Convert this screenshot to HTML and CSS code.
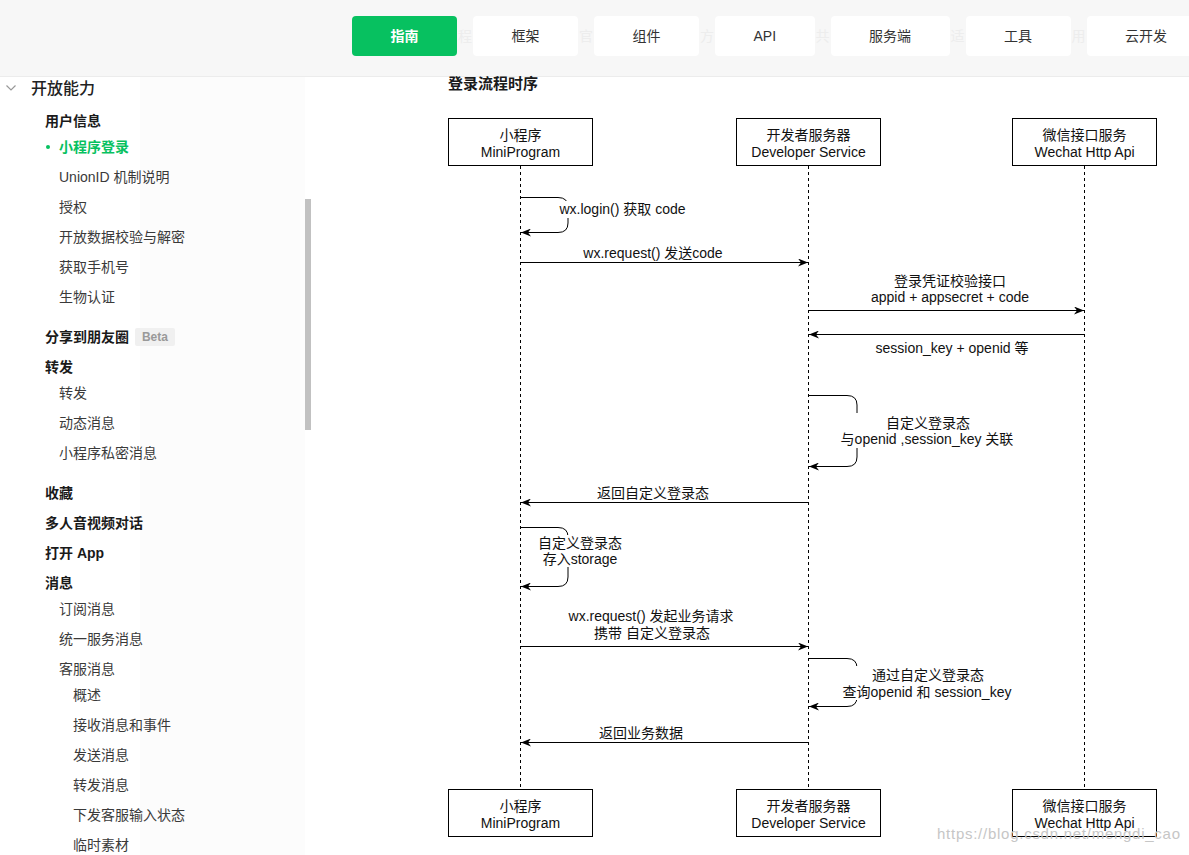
FILE: index.html
```html
<!DOCTYPE html>
<html>
<head>
    <meta charset="utf-8">
    <title>小程序登录</title>
    <link rel="stylesheet" href="styles.css">
</head>
<body>
    <header class="topbar">
        <nav class="tabs">
            <a class="tab tab-active">指南</a>
            <span class="ghost">程</span>
            <a class="tab">框架</a>
            <span class="ghost">官</span>
            <a class="tab">组件</a>
            <span class="ghost">方</span>
            <a class="tab">API</a>
            <span class="ghost">共</span>
            <a class="tab">服务端</a>
            <span class="ghost">适</span>
            <a class="tab">工具</a>
            <span class="ghost">用</span>
            <a class="tab">云开发</a>
        </nav>
    </header>

    <div class="layout">
        <aside class="sidebar">
            <div class="side-head">
                <svg class="chevron" width="10" height="6" viewBox="0 0 10 6"><polyline points="0.5,0.5 5,5 9.5,0.5" fill="none" stroke="#999" stroke-width="1.2"/></svg>
                <span>开放能力</span>
            </div>

            <div class="group-title">用户信息</div>
            <ul class="side-list">
                <li class="active">小程序登录</li>
                <li>UnionID 机制说明</li>
                <li>授权</li>
                <li>开放数据校验与解密</li>
                <li>获取手机号</li>
                <li>生物认证</li>
            </ul>

            <div class="group-title">分享到朋友圈 <span class="badge">Beta</span></div>
            <div class="group-title">转发</div>
            <ul class="side-list">
                <li>转发</li>
                <li>动态消息</li>
                <li>小程序私密消息</li>
            </ul>

            <div class="group-title">收藏</div>
            <div class="group-title">多人音视频对话</div>
            <div class="group-title">打开 App</div>
            <div class="group-title">消息</div>
            <ul class="side-list">
                <li>订阅消息</li>
                <li>统一服务消息</li>
                <li class="sub-title">客服消息</li>
                <li class="nested">概述</li>
                <li class="nested">接收消息和事件</li>
                <li class="nested">发送消息</li>
                <li class="nested">转发消息</li>
                <li class="nested">下发客服输入状态</li>
                <li class="nested">临时素材</li>
            </ul>

            <div class="scroll-thumb"></div>
        </aside>

        <main class="content">
            <h3 class="doc-title">登录流程时序</h3>

            <svg class="seq" width="877" height="755" viewBox="312 100 877 755">
                <defs>
                    <marker id="arrow" viewBox="0 0 10 8" refX="10" refY="4" markerWidth="10" markerHeight="8" markerUnits="userSpaceOnUse" orient="auto">
                        <path d="M0,0 L10,4 L0,8 L3,4 Z" fill="#000"/>
                    </marker>
                </defs>

                <!-- lifelines -->
                <g class="lifeline">
                    <line x1="520.5" y1="166" x2="520.5" y2="789"/>
                    <line x1="808.5" y1="166" x2="808.5" y2="789"/>
                    <line x1="1084.5" y1="166" x2="1084.5" y2="789"/>
                </g>

                <!-- participants -->
                <g class="actor">
                    <rect x="448.5" y="118.5" width="144" height="47"/>
                    <text x="520.5" y="140">小程序</text>
                    <text x="520.5" y="157">MiniProgram</text>

                    <rect x="736.5" y="118.5" width="144" height="47"/>
                    <text x="808.5" y="140">开发者服务器</text>
                    <text x="808.5" y="157">Developer Service</text>

                    <rect x="1012.5" y="118.5" width="144" height="47"/>
                    <text x="1084.5" y="140">微信接口服务</text>
                    <text x="1084.5" y="157">Wechat Http Api</text>

                    <rect x="448.5" y="789.5" width="144" height="47"/>
                    <text x="520.5" y="811">小程序</text>
                    <text x="520.5" y="828">MiniProgram</text>

                    <rect x="736.5" y="789.5" width="144" height="47"/>
                    <text x="808.5" y="811">开发者服务器</text>
                    <text x="808.5" y="828">Developer Service</text>

                    <rect x="1012.5" y="789.5" width="144" height="47"/>
                    <text x="1084.5" y="811">微信接口服务</text>
                    <text x="1084.5" y="828">Wechat Http Api</text>
                </g>

                <!-- messages -->
                <g class="msg">
                    <path d="M520.5 197.5 H558 Q568 197.5 568 207 V223 Q568 232.5 558 232.5 H521"/>
                    <path d="M520.5 262.5 H808"/>
                    <path d="M808.5 310.5 H1084"/>
                    <path d="M1084.5 334.5 H809"/>
                    <path d="M808.5 395.5 H847 Q857 395.5 857 405 V457 Q857 466.5 847 466.5 H809"/>
                    <path d="M808.5 502.5 H521"/>
                    <path d="M520.5 527.5 H558 Q568 527.5 568 537 V577 Q568 586.5 558 586.5 H521"/>
                    <path d="M520.5 646.5 H808"/>
                    <path d="M808.5 658.5 H847 Q857 658.5 857 668 V697 Q857 706.5 847 706.5 H809"/>
                    <path d="M808.5 742.5 H521"/>
                </g>

                <!-- label backgrounds over the self calls -->
                <g class="label-bg">
                    <rect x="556" y="201" width="134" height="17"/>
                    <rect x="836" y="413" width="183" height="35"/>
                    <rect x="535" y="535" width="90" height="32"/>
                    <rect x="837" y="666" width="180" height="34"/>
                </g>

                <g class="label">
                    <text x="622.5" y="214">wx.login() 获取 code</text>
                    <text x="653" y="258">wx.request() 发送code</text>
                    <text x="950" y="286">登录凭证校验接口</text>
                    <text x="950" y="302">appid + appsecret + code</text>
                    <text x="952" y="353">session_key + openid 等</text>
                    <text x="928" y="428">自定义登录态</text>
                    <text x="927" y="444">与openid ,session_key 关联</text>
                    <text x="653" y="498">返回自定义登录态</text>
                    <text x="580" y="548">自定义登录态</text>
                    <text x="580" y="564">存入storage</text>
                    <text x="651" y="621">wx.request() 发起业务请求</text>
                    <text x="652" y="638">携带 自定义登录态</text>
                    <text x="928" y="680">通过自定义登录态</text>
                    <text x="927" y="697">查询openid 和 session_key</text>
                    <text x="641" y="738">返回业务数据</text>
                </g>

                <text class="watermark" x="937" y="839" textLength="243">https://blog.csdn.net/mengdi_cao</text>
            </svg>
        </main>
    </div>
</body>
</html>
```

FILE: styles.css
```css
* {
    margin: 0;
    padding: 0;
    box-sizing: border-box;
}

body {
    font-family: "Liberation Sans", "Noto Sans CJK SC", sans-serif;
    background: #fff;
    color: #333;
    height: 855px;
    overflow: hidden;
}

/* top navigation */
.topbar {
    height: 77px;
    background: #f7f7f7;
    border-bottom: 1px solid #ececec;
}

.tabs {
    display: flex;
    align-items: center;
    padding: 16px 0 0 352px;
}

.tab {
    display: block;
    flex-shrink: 0;
    height: 40px;
    line-height: 40px;
    padding: 0 38.5px;
    background: #fff;
    border-radius: 4px;
    font-size: 14px;
    color: #333;
    white-space: nowrap;
    cursor: pointer;
}

.tab-active {
    background: #07c160;
    color: #fff;
    font-weight: 700;
}

/* faint text of the banner showing between the tabs */
.ghost {
    flex-shrink: 0;
    width: 16px;
    overflow: hidden;
    font-size: 14px;
    line-height: 40px;
    text-align: center;
    white-space: nowrap;
    color: #ededed;
    user-select: none;
}

/* layout */
.layout {
    display: flex;
    height: 778px;
}

.sidebar {
    position: relative;
    display: flex;
    flex-direction: column;
    width: 312px;
    flex-shrink: 0;
    background: linear-gradient(90deg, #fff 140px, #fcfcfc 140px, #fcfcfc 305px, #fff 305px);
    font-size: 14px;
    overflow: hidden;
}

.side-head {
    display: flex;
    align-items: center;
    flex-shrink: 0;
    height: 22px;
    margin: -1px 0 4px;
    font-size: 16px;
    font-weight: 500;
    color: #222;
}

.chevron {
    margin: 1px 15px 0 6px;
}

.group-title {
    flex-shrink: 0;
    height: 22px;
    line-height: 22px;
    margin-top: 8px;
    padding-left: 45px;
    font-weight: 700;
    color: #1a1a1a;
    white-space: nowrap;
}

.badge {
    display: inline-block;
    margin-left: 2px;
    padding: 0 7px;
    height: 18px;
    line-height: 18px;
    vertical-align: 1px;
    background: #f0f0f0;
    border-radius: 2px;
    font-size: 12px;
    color: #999;
}

.side-list {
    flex-shrink: 0;
    list-style: none;
    margin-bottom: 6px;
}

.side-list li {
    position: relative;
    height: 30px;
    line-height: 30px;
    padding-left: 59px;
    color: #3a3a3a;
    white-space: nowrap;
}

.side-list li.active {
    color: #07c160;
    font-weight: 700;
}

.side-list li.active:before {
    content: "";
    position: absolute;
    left: 46px;
    top: 13px;
    width: 4px;
    height: 4px;
    border-radius: 50%;
    background: #07c160;
}

.side-list li.sub-title {
    height: 22px;
    line-height: 22px;
    margin-top: 4px;
}

.side-list li.nested {
    padding-left: 73px;
}

.scroll-thumb {
    position: absolute;
    left: 305px;
    top: 122px;
    width: 6px;
    height: 231px;
    background: #c1c1c1;
}

/* content */
.content {
    flex-grow: 1;
    padding-left: 136px;
}

.doc-title {
    margin-top: -3px;
    font-size: 15px;
    line-height: 20px;
    font-weight: 700;
    color: #1a1a1a;
}

.seq {
    display: block;
    margin: 6px 0 0 -136px;
    font-family: "Liberation Sans", "Noto Sans CJK SC", sans-serif;
    font-size: 14px;
}

.lifeline line {
    stroke: #000;
    stroke-width: 1;
    stroke-dasharray: 3 3;
}

.actor rect {
    fill: #fff;
    stroke: #000;
    stroke-width: 1;
}

.actor text,
.label text {
    fill: #111;
    text-anchor: middle;
}

.msg path {
    fill: none;
    stroke: #000;
    stroke-width: 1;
    marker-end: url(#arrow);
}

.label-bg rect {
    fill: #fff;
}

.watermark {
    font-size: 15px;
    fill: #c6c6c6;
}
```
